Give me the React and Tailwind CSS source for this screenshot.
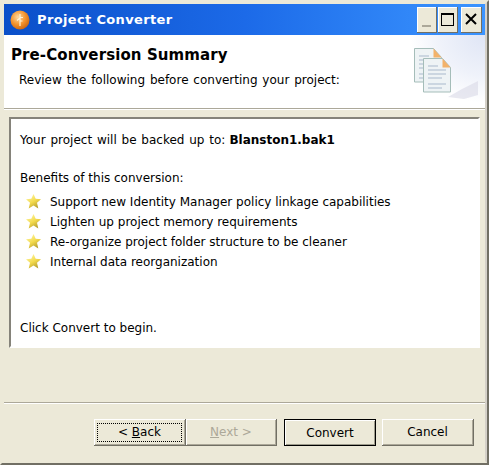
const benefits = [
  "Support new Identity Manager policy linkage capabilities",
  "Lighten up project memory requirements",
  "Re-organize project folder structure to be cleaner",
  "Internal data reorganization",
];

function AppIcon() {
  return (
    <svg width="20" height="20" viewBox="0 0 20 20" className="shrink-0">
      <defs>
        <radialGradient id="orb" cx="40%" cy="35%" r="70%">
          <stop offset="0%" stopColor="#ffd9a0" />
          <stop offset="55%" stopColor="#f4942e" />
          <stop offset="100%" stopColor="#c9640f" />
        </radialGradient>
      </defs>
      <circle cx="10" cy="10" r="9.5" fill="url(#orb)" />
      <path d="M10 4v12M10 8l-3 2.5M10 7.5h3M10 11h2.5" stroke="#fff3d8" strokeWidth="1.2" fill="none" />
    </svg>
  );
}

function Star() {
  return (
    <svg width="15" height="15" viewBox="0 0 15 15" className="mt-[-2px] shrink-0">
      <defs>
        <linearGradient id="star" x1="0" y1="0" x2="0.6" y2="1">
          <stop offset="0%" stopColor="#fffbb8" />
          <stop offset="60%" stopColor="#f3da4c" />
          <stop offset="100%" stopColor="#b8a030" />
        </linearGradient>
      </defs>
      <path d="M7.5 0l2.2 4.8 5.3 .5-4 3.5 1.3 5.7-4.8-3-4.8 3 1.3-5.7-4-3.5 5.3-.5z" fill="url(#star)" />
    </svg>
  );
}

function Page({ x, y }) {
  return (
    <g transform={`translate(${x} ${y})`}>
      <path d="M.5 .5h19l8 9v24.5h-27z" fill="#eef3f5" stroke="#a5bdb9" />
      <path d="M19.5 .5l8 9h-8z" fill="#f2b26a" />
      <path d="M5 8h10M5 12h18M5 16h18M5 20h14M5 26h18M5 30h14" stroke="#a9b9cc" strokeWidth="1" />
    </g>
  );
}

function Banner() {
  return (
    <div className="relative h-[73px] w-[75px] overflow-hidden">
      <svg width="75" height="68" viewBox="0 0 75 68" className="absolute inset-0">
        <defs>
          <radialGradient id="wash" cx="100%" cy="0%" r="100%">
            <stop offset="0%" stopColor="#dfe5f5" />
            <stop offset="60%" stopColor="#eff2fa" />
            <stop offset="100%" stopColor="#ffffff" />
          </radialGradient>
        </defs>
        <rect width="75" height="68" fill="url(#wash)" />
        <path d="M38 62l14-8 16-8v14l-14 4z" fill="#d9d9e6" opacity="0.6" />
        <Page x={4} y={13} />
        <Page x={13} y={23} />
      </svg>
    </div>
  );
}

function Button({ children, variant, className }) {
  if (variant === "default") {
    return (
      <button className={`h-[27px] border border-black bg-[#ece9d8] shadow-[inset_1px_1px_0_#fff,inset_-1px_-1px_0_#9d9b8c] text-[12px] text-black ${className}`}>
        {children}
      </button>
    );
  }
  return (
    <button
      className={`h-[27px] border-r border-b border-[#716f64] bg-[#ece9d8] shadow-[inset_1px_1px_0_#fff,inset_-1px_-1px_0_#aca899] text-[12px] ${
        variant === "disabled" ? "text-[#aca899]" : "text-black"
      } ${className}`}
    >
      {variant === "focus" ? (
        <span className="m-[3px] flex h-[19px] items-center justify-center border border-dotted border-black">
          {children}
        </span>
      ) : (
        children
      )}
    </button>
  );
}

function CaptionButton({ children, className }) {
  return (
    <div className={`flex h-[26px] border-r border-b border-[#716f64] bg-[#ece9d8] shadow-[inset_1px_1px_0_#fff] ${className}`}>
      {children}
    </div>
  );
}

export default function App() {
  return (
    <div className="flex h-[465px] w-[489px] flex-col border-2 border-r-[#716f64] border-b-[#716f64] border-t-[#ece9d8] border-l-[#ece9d8] bg-[#ece9d8] font-['DejaVu_Sans',sans-serif] text-[12px] text-black">
      <div className="flex grow flex-col border-2 border-[#ece9d8] border-r-[#d4d0c8]">
        {/* title bar */}
        <div className="flex h-[31px] shrink-0 items-center bg-gradient-to-r from-[#0a4fc9] via-[#1c6ae8] to-[#3b94ff] pl-[6px] pr-[3px]">
          <AppIcon />
          <span className="ml-[7px] grow text-[13px] font-bold tracking-[0.35px] text-white">
            Project Converter
          </span>
          <div className="flex gap-px">
            <CaptionButton className="w-[20px] items-end justify-center pb-[5px]">
              <span className="h-[2px] w-[9px] bg-[#aca899]" />
            </CaptionButton>
            <CaptionButton className="w-[20px] items-center justify-center">
              <span className="h-[13px] w-[13px] border border-t-2 border-black" />
            </CaptionButton>
            <CaptionButton className="ml-[2px] w-[21px] items-center justify-center">
              <svg width="12" height="12" viewBox="0 0 12 12">
                <path d="M1 1l10 10M11 1L1 11" stroke="#000" strokeWidth="2" />
              </svg>
            </CaptionButton>
          </div>
        </div>

        {/* header */}
        <div className="flex h-[74px] shrink-0 justify-between border-b border-[#aca899] bg-white">
          <div className="pl-[7px] pt-[10px]">
            <div className="text-[15px] font-bold leading-[20px] tracking-[0.1px]">Pre-Conversion Summary</div>
            <div className="mt-[6px] pl-[8px] leading-[18px] [word-spacing:1px]">
              Review the following before converting your project:
            </div>
          </div>
          <Banner />
        </div>
        <div className="h-px shrink-0 bg-white" />

        {/* body */}
        <div className="mx-[5px] mt-[7px] flex h-[231px] shrink-0 flex-col border-2 border-r-white border-b-white border-t-[#85837a] border-l-[#85837a] bg-white pl-[9px] pt-[12px] pb-[9px]">
          <div className="flex items-center leading-[18px]">
            <span className="[word-spacing:1px]">Your project will be backed up to:</span>
            <span className="ml-[4px] font-bold">Blanston1.bak1</span>
          </div>
          <div className="mt-[20px] leading-[18px]">Benefits of this conversion:</div>
          <ul className="mt-[5px] flex flex-col">
            {benefits.map((b) => (
              <li key={b} className="flex h-[20px] items-center pl-[6px]">
                <Star />
                <span className="ml-[9px]">{b}</span>
              </li>
            ))}
          </ul>
          <div className="mt-auto leading-[18px]">Click Convert to begin.</div>
        </div>

        <div className="grow" />
        <div className="h-px shrink-0 bg-[#aca899]" />
        <div className="h-px shrink-0 bg-white" />

        {/* buttons */}
        <div className="flex h-[57px] shrink-0 items-start justify-end pr-[11px] pt-[15px]">
          <Button variant="focus" className="w-[92px]">
            <span>&lt; <u>B</u>ack</span>
          </Button>
          <Button variant="disabled" className="w-[91px]">
            <span><u>N</u>ext &gt;</span>
          </Button>
          <Button variant="default" className="ml-[7px] w-[92px]">Convert</Button>
          <Button className="ml-[6px] w-[92px]">Cancel</Button>
        </div>
      </div>
    </div>
  );
}
